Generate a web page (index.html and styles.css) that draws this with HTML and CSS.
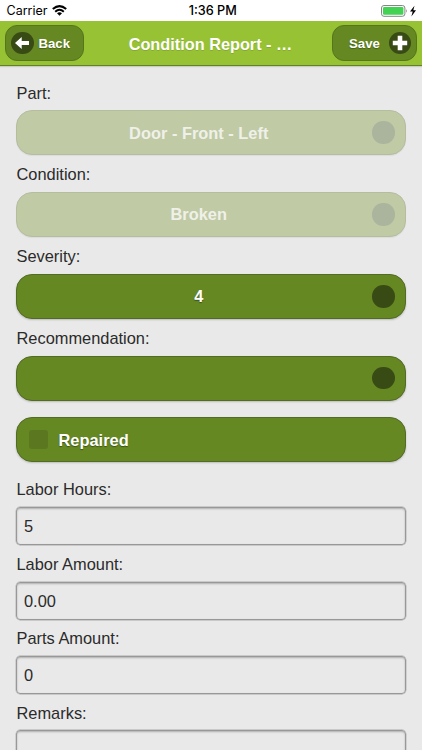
FILE: index.html
```html
<!DOCTYPE html>
<html lang="en">
<head>
<meta charset="utf-8">
<title>Condition Report</title>
<link rel="stylesheet" href="styles.css">
</head>
<body>
<div class="status">
  <div class="carrier"><span>Carrier</span>
    <svg width="15" height="11" viewBox="0 0 15 11"><g fill="none" stroke="#000" stroke-width="2"><path d="M.8 4.1Q7.5-1.9 14.2 4.1"/><path d="M3.2 6.7Q7.5 2.9 11.8 6.7"/></g><path d="M7.5 10.8 5 8.3Q7.5 6.3 10 8.3Z"/></svg>
  </div>
  <div class="time">1:36 PM</div>
  <div class="power">
    <svg width="36" height="13" viewBox="0 0 36 13"><rect x=".5" y=".5" width="23.4" height="10.8" rx="2.5" fill="#fff" stroke="#858585"/><rect x="2" y="2" width="20.4" height="7.8" rx="1.2" fill="#43d253"/><path d="M25 4q1.7 1.9 0 3.8z" fill="#858585"/><path d="M33.5 .8 29 6.6h2.7l-1.3 4.8L35 5.2h-2.7z"/></svg>
  </div>
</div>
<header class="bar">
  <button class="btn back"><span class="disc"><svg width="22" height="22" viewBox="0 0 22 22"><path d="M4 11 10.7 5v4.1H18v4h-7.3v4z" fill="#fff"/></svg></span><span class="caption">Back</span></button>
  <h1>Condition Report - …</h1>
  <button class="btn save"><span class="caption">Save</span><span class="disc"><svg width="22" height="22" viewBox="0 0 22 22"><path d="M8.7 3.8h4.6v4.9h4.9v4.6h-4.9v4.9H8.7v-4.9H3.8V8.7h4.9z" fill="#fff"/></svg></span></button>
</header>
<main>
  <div class="field"><label>Part:</label><div class="select disabled"><span>Door - Front - Left</span><i class="disc"></i></div></div>
  <div class="field"><label>Condition:</label><div class="select disabled"><span>Broken</span><i class="disc"></i></div></div>
  <div class="field"><label>Severity:</label><div class="select"><span>4</span><i class="disc"></i></div></div>
  <div class="field"><label>Recommendation:</label><div class="select"><span></span><i class="disc"></i></div></div>
  <div class="check"><i class="box"></i>Repaired</div>
  <div class="entry"><label>Labor Hours:</label><div class="input">5</div></div>
  <div class="entry"><label>Labor Amount:</label><div class="input">0.00</div></div>
  <div class="entry"><label>Parts Amount:</label><div class="input">0</div></div>
  <div class="entry"><label>Remarks:</label><div class="input"></div></div>
</main>
</body>
</html>
```
FILE: styles.css
```css
* { box-sizing: border-box; }
html, body { height: 750px; overflow: hidden; }
body {
  margin: 0;
  background: #e9e9e9;
  color: #2b2b2b;
  font: 16.4px/20px "Liberation Sans", Arial, sans-serif;
}
svg { display: block; }
.status {
  display: grid;
  grid-template-columns: 1fr auto 1fr;
  align-items: center;
  height: 21px;
  padding: 1px 5px 0 6.5px;
  background: #fff;
  color: #000;
  font: 12.5px/20px Inter, sans-serif;
}
.carrier { display: flex; align-items: center; gap: 5px; }
.carrier svg { margin-top: -1px; }
.time { font-size: 12.7px; font-weight: 500; padding-left: 2px; }
.power { justify-self: end; }
.bar {
  display: flex;
  align-items: center;
  height: 45px;
  padding: 0 5px;
  background: #97c234;
  border-bottom: 1px solid #63812a;
  box-shadow: 0 1px 1px #c9cdc2;
}
.bar h1 {
  flex: 1;
  margin: 0;
  padding: 1px 0 0 5px;
  color: #fff;
  font-size: 16.3px;
  line-height: 22px;
  text-align: center;
  text-shadow: 0 1px 0 #86aa30;
  white-space: nowrap;
}
.btn {
  display: flex;
  align-items: center;
  height: 36px;
  margin: 0;
  border: 1px solid #56751c;
  border-radius: 12px;
  background: #668823;
  color: #fff;
  font: bold 13.2px/20px "Liberation Sans", Arial, sans-serif;
  text-shadow: 0 1px 1px #465f17;
}
.caption { padding-top: 2px; }
.back { width: 79px; padding: 0 0 0 5px; gap: 5px; }
.save { width: 85px; padding: 0 5px 0 16px; justify-content: space-between; }
.disc {
  flex: none;
  width: 22.5px;
  height: 22.5px;
  border-radius: 50%;
  background: #394b15;
}
main { padding: 16.7px 16.5px 0 16px; }
label { display: block; height: 20px; padding-left: .5px; }
.field { height: 81.8px; }
.field label { margin-bottom: 7.5px; }
.select, .check {
  display: flex;
  align-items: center;
  height: 45px;
  border: 1px solid #526b25;
  border-radius: 16px;
  background: #668822;
  box-shadow: 0 1px 2px rgba(0, 0, 0, .2);
  color: #fff;
  font-weight: bold;
  text-shadow: 0 1px 1px #3c5114;
}
.select { padding-right: 10px; }
.select span { flex: 1; padding-left: 8.5px; text-align: center; }
.disabled {
  border-color: #b5bd9f;
  background: #c0caa5;
  box-shadow: 0 1px 1px rgba(0, 0, 0, .06);
  color: #eff1e9;
  text-shadow: none;
}
.disabled .disc { background: #abb49d; }
.check { margin-top: 7.3px; padding-left: 12px; gap: 11px; }
.box { width: 18.5px; height: 18.5px; border-radius: 3px; background: #5b7820; }
.entry { height: 74.4px; }
.check + .entry { margin-top: 17.2px; }
.entry label { margin-bottom: 7.8px; }
.input {
  height: 38px;
  padding: 0 7px;
  border: 1px solid #989898;
  border-radius: 4px;
  box-shadow: inset 0 1px 2px rgba(0, 0, 0, .25), 0 0 0 .4px #aaa;
  line-height: 36px;
}
```
